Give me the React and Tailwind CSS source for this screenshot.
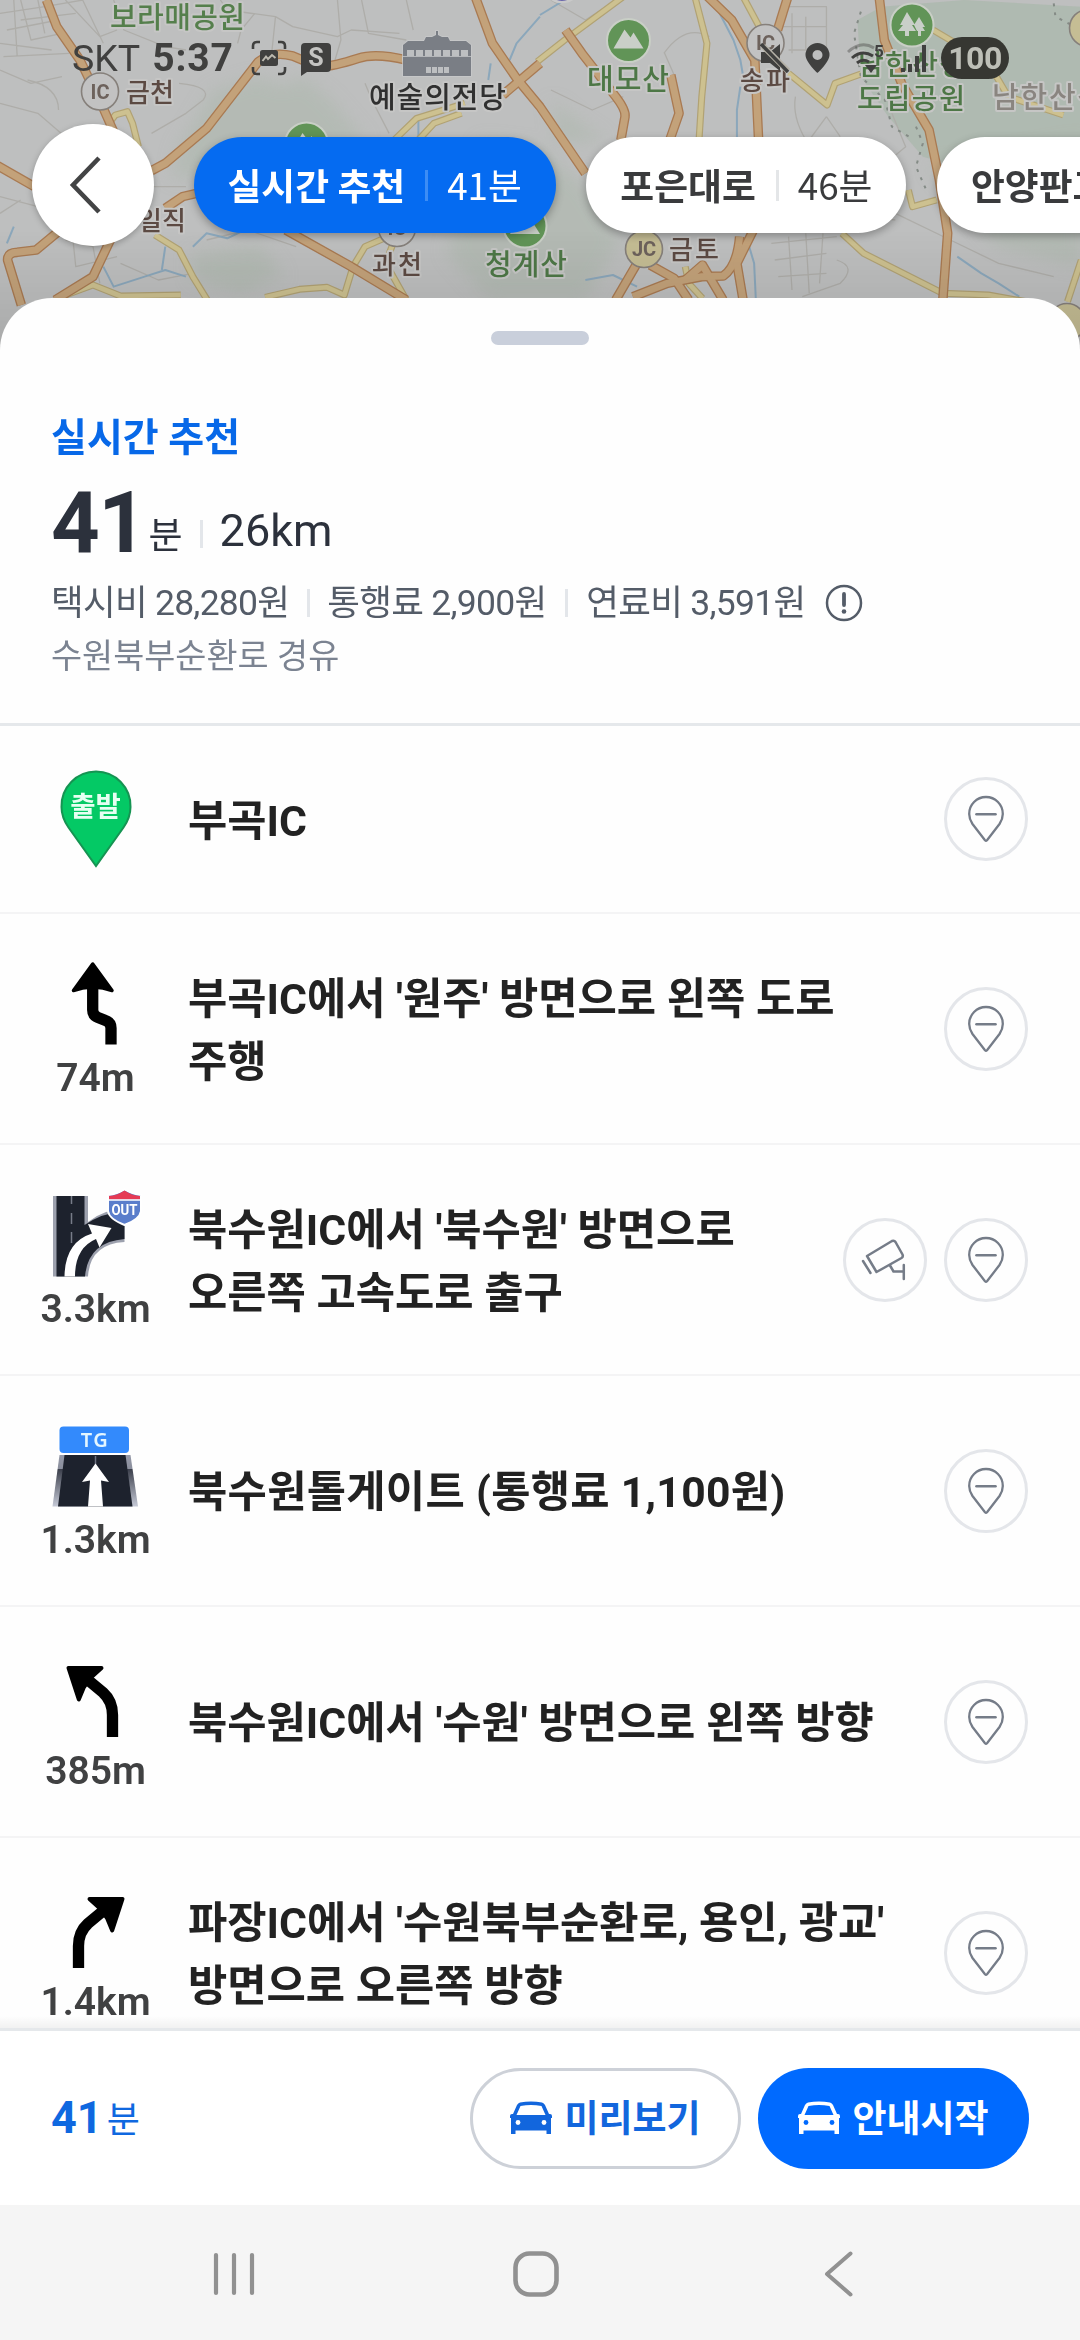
import React from "react";

const ORANGE = [
  "M135 0 L165 80 L232 180 L300 325 L345 430",
  "M-10 495 L100 560",
  "M440 512 L480 490 L600 385 L690 265 L750 185 Q790 152 850 168 L920 198 Q950 205 1040 175 Q1090 158 1180 180",
  "M1380 -10 L1430 130 L1500 235 L1568 320 L1700 520",
  "M1460 285 L1568 190",
  "M480 625 L530 590 L580 578",
  "M62 915 L22 780 Q22 758 50 757 L105 750 L175 690",
  "M325 710 L270 830 L160 900",
  "M830 690 L1020 800 L1180 900",
  "M1642 90 L1690 160 L1788 290 Q1818 330 1815 350 L1803 420",
  "M1948 225 L1972 340 L1945 420",
  "M2055 -10 L2125 60 L2192 180 L2203 420",
  "M2288 -10 L2258 90",
  "M2553 -10 L2568 120 L2618 250 L2698 390 L2728 540 L2752 700 L2738 900",
  "M1850 790 L1788 900",
  "M1838 890 L1938 850 L2038 830 L2100 828 Q2140 800 2148 710",
  "M2188 690 L2140 790 L2158 900",
  "M1888 795 L1958 835 L2000 900",
  "M1990 840 L2040 795 L2100 900",
];
const YELLOW = [
  "M320 365 L335 345 L370 335 L385 370 L402 440",
  "M450 705 L520 750 L560 830 L605 905",
  "M165 895 L270 855 L350 888 L525 885",
  "M1145 420 L1210 355 L1350 310",
  "M1215 420 L1260 370 L1340 340",
  "M1115 715 L1060 740 L1025 800 L1000 885 L950 862 L870 868 L770 892",
  "M1145 720 L1120 790 L1180 900",
  "M1560 185 L1640 120 L1810 -10",
  "M2018 -10 L2053 130 L2038 290 L2030 420",
  "M2158 -10 L2210 90",
  "M2290 220 L2402 315 L2425 250 L2500 222",
  "M2710 90 L2775 130 L2888 220 L2928 290 L3088 345",
  "M2445 700 L2508 760 L2738 880 L2870 885 L2980 905",
  "M2638 570 L2650 620 L2720 600",
  "M3100 905 L3140 780",
  "M1990 800 L2000 850 L2040 895",
];
const MINOR = [
  "M0 40 L130 20 L240 0 M60 0 L90 120 L180 100 M20 90 L170 60 M190 0 L290 110 L340 90 M240 0 L300 130",
  "M0 210 L90 250 L180 230 M80 240 Q170 260 170 330 M0 310 L110 340 L200 420 M330 0 L360 90 L480 140 L540 150",
  "M640 0 L660 30 L800 50 L850 80 L980 110 L1020 90 L1160 100 M800 50 L790 150 M980 0 L990 120 L970 190",
  "M1050 0 L1070 100 L1180 120 M1180 0 L1200 90 M1060 250 L1080 300 L1130 400 M740 40 L700 90 L690 130",
  "M0 590 L110 620 L140 650 M0 640 L60 600 M520 250 Q620 260 590 300 L540 340 L440 400 M350 560 L540 560",
  "M190 720 L270 740 L290 850 M210 700 L220 800 L340 770 M350 790 L460 840 L560 820 M600 720 L720 690 L860 740",
  "M1600 270 L1720 330 L1810 290 M1928 160 Q1990 70 2060 110 M1930 160 L1960 230 M1600 0 L1700 60 L1790 0",
  "M2270 20 L2400 20 L2400 150 L2290 150 M2300 40 L2300 160 M2340 50 L2340 150 M2270 80 L2400 80",
  "M2310 290 Q2300 350 2340 420 M2400 350 L2350 420 M2400 350 L2440 410 M2560 500 L2630 440 L2590 340",
  "M2240 730 L2430 710 M2250 780 L2400 760 M2260 830 L2400 820 M2290 710 L2300 870 M2340 700 L2350 880 M2390 700 L2380 850",
  "M2430 780 Q2490 800 2440 850 L2330 890 M2600 640 L2760 720 L2900 790 L3060 830 M2440 640 L2600 660",
  "M40 0 L50 170 M110 0 L130 100 M0 130 L150 150 M60 60 L220 40 M10 170 L200 160",
];
const GREEN = [
  "M620 270 L750 230 L820 260 L880 230 L960 300 L1060 420 L900 540 L700 500 L500 540 L520 440 Z",
  "M1400 420 L1560 440 L1700 560 L1800 720 L1700 900 L1420 900 L1300 760 Z",
  "M1600 300 L1700 380 L1760 420 L1620 430 Z",
  "M560 760 L760 740 L820 830 L700 880 L560 840 Z",
  "M2700 500 L3140 420 L3140 800 L2900 740 L2780 600 Z",
];
const FOREST = [
  "M2490 60 L2560 20 L2800 0 L3140 20 L3140 420 L3000 480 L2780 500 L2680 470 L2580 350 L2500 230 Z",
];
const BLUE = [
  "M1568 50 L1500 130 L1480 180",
  "M1568 45 L1640 0",
  "M2080 20 L2130 120 L2150 180 L2160 240",
  "M2150 260 L2140 330 L2140 420",
  "M2170 720 L2190 790 L2195 900",
  "M300 800 L330 860 L420 830 L480 810 L540 830 M470 810 L480 740",
  "M560 740 L600 700 L660 715 L710 690",
  "M20 730 L40 680",
  "M1425 190 L1418 240",
  "M1215 350 L1215 410",
  "M2780 770 L2850 820 L2900 850 L2960 890",
  "M1700 840 L1780 825 L1850 860",
];

function PeakBadge({ x, y }) {
  return (
    <g transform={`translate(${x} ${y})`}>
      <circle r="21.5" fill="#619457" stroke="#c9cfc6" strokeWidth="2" />
      <path d="M-15 8 L-4 -11 L2 -3 L5 -8 L15 8 Z" fill="#c9cfc8" />
    </g>
  );
}

function JunctionBadge({ x, y, label, fill = "#c2c2c2" }) {
  return (
    <g transform={`translate(${x} ${y})`}>
      <circle r="18.5" fill={fill} stroke="#86807b" strokeWidth="1.6" />
      <text y="7" textAnchor="middle" fontSize="20" fontWeight="700" fill="#6d625c">{label}</text>
    </g>
  );
}

const LABELS = [
  ["보라매공원", 110, 28, 135, 29, "#557f4c"],
  ["금천", 126, 102, 48, 26, "#5c4a43"],
  ["예술의전당", 369, 108, 137, 29, "#303030"],
  ["일직", 138, 230, 48, 26, "#5c4a43"],
  ["과천", 372, 274, 50, 26, "#5c4a43"],
  ["청계산", 485, 275, 82, 29, "#4d7746"],
  ["대모산", 587, 90, 82, 29, "#4d7746"],
  ["송파", 740, 90, 50, 26, "#5c4a43"],
  ["남한산성", 858, 75, 107, 28, "#4d7746"],
  ["도립공원", 857, 109, 108, 28, "#4d7746"],
  ["남한산성", 992, 108, 112, 29, "#8a8580"],
  ["금토", 669, 259, 50, 26, "#5c4a43"],
];

function MapView() {
  return (
    <svg className="absolute inset-0 h-[360px] w-[1080px]" viewBox="0 0 1080 360" fontFamily='Roboto, "Noto Sans CJK KR", sans-serif'>
      <defs>
        <linearGradient id="shade" x1="0" y1="0" x2="0" y2="1">
          <stop offset="0" stopColor="#000" stopOpacity="0" />
          <stop offset="1" stopColor="#000" stopOpacity="0.12" />
        </linearGradient>
        <filter id="soft"><feGaussianBlur stdDeviation="24" /></filter>
      </defs>
      <rect width="1080" height="360" fill="#bebfbf" />
      <g transform="scale(0.34435 0.33333)" fill="none" strokeLinejoin="round">
        <g filter="url(#soft)">{GREEN.map((d) => <path key={d} d={d} fill="#adb8ae" opacity="0.6" />)}</g>
        {FOREST.map((d) => <path key={d} d={d} fill="#adb8ae" opacity="0.85" />)}
        {MINOR.map((d) => <path key={d} d={d} stroke="#aeada9" strokeWidth="1.3" vectorEffect="non-scaling-stroke" />)}
        {BLUE.map((d) => <path key={d} d={d} stroke="#8ba7bb" strokeWidth="2" vectorEffect="non-scaling-stroke" />)}
        {YELLOW.map((d) => <path key={d} d={d} stroke="#b1a274" strokeWidth="7" vectorEffect="non-scaling-stroke" />)}
        {YELLOW.map((d) => <path key={d + "f"} d={d} stroke="#cdc190" strokeWidth="4.6" vectorEffect="non-scaling-stroke" />)}
        {ORANGE.map((d) => <path key={d} d={d} stroke="#a97a52" strokeWidth="9.6" vectorEffect="non-scaling-stroke" />)}
        {ORANGE.map((d) => <path key={d + "f"} d={d} stroke="#c3a27a" strokeWidth="7" vectorEffect="non-scaling-stroke" />)}
        <path d="M2500 35 L2480 100 L2500 230 L2570 300 L2590 380 L2640 410 M2660 380 L2680 430 L2660 500 L2690 570 M3060 10 L3065 50 L3140 90" stroke="#848b86" strokeWidth="2" strokeDasharray="3 6" vectorEffect="non-scaling-stroke" />
      </g>
      <circle cx="562" cy="-17" r="19" fill="#4a45a0" stroke="#c9c9c9" strokeWidth="2.5" />
      <PeakBadge x="628.5" y="40.5" />
      <PeakBadge x="306.5" y="144" />
      <PeakBadge x="525" y="226" />
      <g transform="translate(912 25)">
        <circle r="21.5" fill="#619457" stroke="#c9cfc6" strokeWidth="2" />
        <path d="M-5 -13 L3 0 H0 L4 6 H-3 V11 H-7 V6 H-14 L-9 0 H-12 Z M7 -8 L13 2 H10.500 L13 6 H9 V11 H6 V6 H5 L2 0 Z" fill="#c9cfc8" />
      </g>
      <JunctionBadge x="100" y="91.500" label="IC" />
      <JunctionBadge x="765.500" y="43" label="IC" />
      <JunctionBadge x="397" y="228" label="IC" />
      <JunctionBadge x="644" y="249" label="JC" fill="#c5bd94" />
      <JunctionBadge x="1088" y="28" label="" fill="#c5bd94" />
      <JunctionBadge x="1067" y="322" label="" fill="#c5bd94" />
      <g fill="#7a7e85" stroke="#c9cacb" strokeWidth="1.5" paintOrder="stroke">
        <path d="M436 31 h2 v4 l4 2 h6 l2 4 h16 l5 4 v15 h-68 v-15 l5 -4 h16 l2 -4 h6 l4 -2 z" />
        <rect x="403" y="57" width="68" height="19" />
      </g>
      <path d="M407 50 h7 v6 h-7z M416 50 h7 v6 h-7z M425 50 h7 v6 h-7z M434 50 h7 v6 h-7z M443 50 h7 v6 h-7z M452 50 h7 v6 h-7z M461 50 h7 v6 h-7z M426 67 h5 v6 h-5z M432 67 h5 v6 h-5z M438 67 h5 v6 h-5z M444 67 h5 v6 h-5z" fill="#bdbfc1" />
      {LABELS.map(([t, x, y, w, s, c]) => (
        <text key={t + x} x={x} y={y} textLength={w} fontSize={s} fontWeight="500" fill={c} stroke="#c6c6c5" strokeWidth="4" strokeLinejoin="round" paintOrder="stroke">{t}</text>
      ))}
      <rect y="230" width="1080" height="130" fill="url(#shade)" />
    </svg>
  );
}

function StatusBar() {
  return (
    <div className="relative flex h-[116px] items-center pl-[72px] pr-[71px] text-[#40403f]">
      <span className="text-[37.500px] leading-[44px]">SKT</span>
      <span className="ml-[12px] text-[39px] font-bold leading-[44px] tracking-[0.900px]">5:37</span>
      <svg className="ml-[17px] size-[36px]" viewBox="0 0 36 36" fill="none" stroke="currentColor" strokeWidth="2.6">
        <path d="M2 9 V6 Q2 2 6 2 H9 M27 2 H30 Q34 2 34 6 V9 M34 27 V30 Q34 34 30 34 H27 M9 34 H6 Q2 34 2 30 V27" />
        <rect x="9" y="10" width="18" height="16" rx="2.500" fill="currentColor" stroke="none" />
        <path d="M11.500 21 L15 16.500 L17 19 L21 15 L24.500 18" stroke="#bcb9b0" strokeWidth="2" />
      </svg>
      <div className="relative ml-[14px] mt-[2px] flex h-[33px] w-[30px] justify-center">
        <svg className="absolute inset-0 h-[33px] w-[30px]" viewBox="0 0 30 33" fill="currentColor"><path d="M4 0 H26 Q30 0 30 4 V25 Q30 29 26 29 H6 L0 33 V4 Q0 0 4 0Z" /></svg>
        <span className="relative text-[25px] font-bold leading-[29px] text-[#c4c4c2]">S</span>
      </div>
      <div className="ml-auto flex items-center">
        <svg className="h-[30px] w-[30px]" viewBox="0 0 30 30" fill="currentColor">
          <path d="M1 9 H10 L20 1 V28 L10 20 H1Z" />
          <path d="M3 3 L28 28" stroke="#b5b1a6" strokeWidth="6" /><path d="M1 1 L28 29" stroke="currentColor" strokeWidth="3.500" />
        </svg>
        <svg className="ml-[15px] h-[30px] w-[25px]" viewBox="0 0 25 30" fill="currentColor"><path fillRule="evenodd" d="M12.500 0 A12 12 0 0 1 24.500 12 C24.500 19 12.500 30 12.500 30 S.5 19 .5 12 A12 12 0 0 1 12.500 0Z M12.500 7 A5 5 0 1 0 12.500 17 A5 5 0 1 0 12.500 7Z" /></svg>
        <svg className="ml-[17px] h-[34px] w-[44px]" viewBox="0 0 44 34" fill="none" stroke="currentColor" strokeWidth="3">
          <path d="M1 11 Q14 -1 27 7" opacity="0.4" /><path d="M5 17 Q15 8 26 15" /><path d="M10 22 Q16 17 22 21" />
          <path d="M18 24 H30 L24 32Z" fill="currentColor" stroke="none" />
          <text x="27" y="16" fontSize="17" fontWeight="700" fill="currentColor" stroke="none">5</text>
        </svg>
        <svg className="ml-[8px] h-[32px] w-[30px]" viewBox="0 0 30 32" fill="currentColor"><path d="M2 26h4v4H2z M9 22h4v8H9z M16 14h4v16h-4z M23 3h4v27h-4z" /></svg>
        <div className="ml-[12px] flex h-[42px] w-[68px] items-center justify-center rounded-full bg-[#363732] text-[32px] font-bold leading-none tracking-[-0.500px] text-[#bdbfb7]">100</div>
      </div>
    </div>
  );
}

function RouteChip({ name, time, active }) {
  return (
    <div className={"flex h-[96px] shrink-0 items-center whitespace-nowrap rounded-full px-[34px] pb-[3px] font-['Noto_Sans_CJK_KR',sans-serif] text-[36.8px] leading-[52px] shadow-[0_3px_8px_rgba(0,0,0,0.3)] " + (active ? "bg-[#056bf1] text-white" : "bg-white text-[#3a3b3d]")}>
      <span className="font-bold">{name}</span>
      <span className={"ml-[20px] mr-[19px] mt-[3px] h-[31px] w-[3px] " + (active ? "bg-[#3d8df5]" : "bg-[#e4e6e8]")} />
      <span>{time}</span>
    </div>
  );
}

function RouteChips() {
  return (
    <div className="relative flex items-center overflow-hidden pb-[40px] pl-[32px] -mt-[6px] pt-[14px]">
      <button className="flex size-[122px] shrink-0 items-center justify-center rounded-full bg-white shadow-[0_2px_6px_rgba(0,0,0,0.25)]">
        <svg className="-ml-[16px] h-[58px] w-[34px]" viewBox="0 0 34 58" fill="none" stroke="#434445" strokeWidth="4.600"><path d="M31 2 L5 29 L31 56" /></svg>
      </button>
      <div className="ml-[39.500px] flex gap-[30.500px]">
        <RouteChip name="실시간 추천" time="41분" active />
        <RouteChip name="포은대로" time="46분" />
        <RouteChip name="안양판교로" time="49분" />
      </div>
    </div>
  );
}

function Bar({ className }) {
  return <span className={"h-[28px] w-[3px] bg-[#e3e6ea] " + className} />;
}

function Summary() {
  return (
    <div className="h-[428px] shrink-0 border-b-[3px] border-[#e5e8eb] px-[51px]">
      <div className="flex justify-center pt-[33px]"><div className="h-[14px] w-[98px] rounded-full bg-[#c9cfdb]" /></div>
      <h2 className="mt-[64px] text-[39px] font-bold leading-[58px] text-[#0768e8]">실시간 추천</h2>
      <div className="mt-[16px] flex h-[80px] items-baseline text-[#2c313c]">
        <span className="text-[85px] font-bold leading-[80px] tracking-[-1.500px]">41</span>
        <span className="ml-[3px] translate-y-[-3px] text-[37px] leading-[50px]">분</span>
        <Bar className="ml-[17px] translate-y-[-4px]" />
        <span className="ml-[17px] translate-y-[-6px] text-[45px] leading-[50px]">26km</span>
      </div>
      <div className="mt-[13px] flex h-[54px] items-center text-[35.500px] leading-[54px] tracking-[-0.720px] text-[#545c68]">
        <span>택시비 28,280원</span><Bar className="ml-[18px] mr-[17px]" />
        <span>통행료 2,900원</span><Bar className="ml-[19px] mr-[18px]" />
        <span>연료비 3,591원</span>
        <svg className="ml-[20px] size-[38px]" viewBox="0 0 38 38" fill="none" stroke="#545c68" strokeWidth="2.500"><circle cx="19" cy="19" r="17" /><path d="M19 10 V21" strokeWidth="3.800" strokeLinecap="round" /><circle cx="19" cy="27.500" r="2.300" fill="#545c68" stroke="none" /></svg>
      </div>
      <p className="mt-[1px] text-[33.800px] leading-[52px] text-[#7b8391]">수원북부순환로 경유</p>
    </div>
  );
}

function IconStart() {
  return (
    <div className="relative flex h-[98px] w-[72px] justify-center">
      <svg className="absolute inset-0 h-[98px] w-[72px]" viewBox="0 0 72 98"><path d="M36 1.500 A34.500 34.500 0 0 1 70.500 37 C70.500 45 68 51 63.500 57.500 L36 96 L8.500 57.500 C4 51 1.500 45 1.500 37 A34.500 34.500 0 0 1 36 1.500Z" fill="#04c965" stroke="#159452" strokeWidth="2" /></svg>
      <span className="relative mt-[17px] text-[27.500px] font-bold leading-[40px] text-[#e6fff2]">출발</span>
    </div>
  );
}

/* Manoeuvre icons share a 96x90 box above their distance. */
const iconBox = "h-[90px] w-[96px]";

function IconKeepLeft() {
  return (
    <svg className={iconBox} viewBox="0 0 96 90">
      <path d="M44.700 14 V54 Q44.700 59.500 50 61.500 L57.500 64.500 Q63 66.500 63 72 V88.500" fill="none" stroke="#000" strokeWidth="11.300" />
      <path d="M44.700 8 L64 34.500 L55 32 L44.700 31 L34.500 32 L25.500 34.500Z" fill="#000" stroke="#000" strokeWidth="3.500" strokeLinejoin="round" />
    </svg>
  );
}

function IconTurnLeft() {
  return (
    <svg className={iconBox} viewBox="0 0 96 90">
      <path d="M40 31 L55 43.500 Q64.500 52 64.500 66 V88" fill="none" stroke="#000" strokeWidth="11.300" />
      <path d="M20.500 19 L53.500 19 L43 28.500 L36 38 L30.800 50.500Z" fill="#000" stroke="#000" strokeWidth="4" strokeLinejoin="round" />
    </svg>
  );
}

function IconTurnRight() {
  return (
    <svg className={iconBox} viewBox="0 0 96 90">
      <path d="M55 31 L40 43.500 Q30.500 52 30.500 66 V88" fill="none" stroke="#000" strokeWidth="11.300" />
      <path d="M74.500 19 L41.500 19 L52 28.500 L59 38 L64.200 50.500Z" fill="#000" stroke="#000" strokeWidth="4" strokeLinejoin="round" />
    </svg>
  );
}

function IconExit() {
  return (
    <svg className={iconBox} viewBox="0 0 96 90">
      <path d="M5 9 H40 V35 Q56 22 76.500 22 V55 Q42 57 40 89.500 H5Z" fill="#9da1ae" />
      <path d="M8.500 9 H36.500 V38 Q54 26 76.500 24 V52 Q40 55 37 89.500 H8.500Z" fill="#1d222d" />
      <path d="M23.500 9 V17 M23.500 26 V37 M23.500 45 V56" stroke="#777c89" strokeWidth="1.500" />
      <path d="M16.500 89.500 Q17 55 44 46.500 L40 37 L63.500 41 L51.500 60.500 L48 52 Q27 61 27 89.500Z" fill="#fff" />
      <path d="M60 8 Q68 7 76.500 2.500 Q84 7 93 8 V24 Q92 32 76.500 38 Q61 32 60 24Z" fill="#5a7dcb" stroke="#fff" strokeWidth="2" />
      <path d="M61 9 Q69 8.500 76.500 3.500 Q84 8.500 92 9 V12.500 H61Z" fill="#e53a55" />
      <path d="M60 13 H93" stroke="#fff" strokeWidth="1.300" />
      <text x="76.500" y="28" textAnchor="middle" fontSize="15" fontWeight="700" textLength="26" lengthAdjust="spacingAndGlyphs" fill="#fff">OUT</text>
    </svg>
  );
}

function IconTollGate() {
  return (
    <svg className={iconBox} viewBox="0 0 96 90">
      <defs><linearGradient id="curb" x1="0" y1="0" x2="0" y2="1"><stop offset="0" stopColor="#9599a8" /><stop offset=".27" stopColor="#8a8e9c" /><stop offset=".28" stopColor="#3c404c" /><stop offset="1" stopColor="#c5c9d6" /></linearGradient></defs>
      <path d="M11.500 37 H82.500 L90 88.500 H4.500Z" fill="url(#curb)" />
      <path d="M16.500 37 H77.500 L84.500 88.500 H10Z" fill="#1d222d" />
      <path d="M47.500 38 V50" stroke="#6d7180" strokeWidth="1.500" />
      <path d="M47.500 45.500 L61 64 L53 62.500 L55 88.500 H40 L42 62.500 L34 64Z" fill="#fff" />
      <rect x="10" y="7" width="72" height="30" rx="5" fill="#fff" />
      <rect x="11.500" y="8.500" width="69.500" height="26.500" rx="4" fill="#338afc" />
      <text x="47" y="29" textAnchor="middle" fontSize="20" fontWeight="600" fill="#e4f6ff" letterSpacing="1.500" fontFamily='"Noto Sans", sans-serif'>TG</text>
    </svg>
  );
}

function PinButton() {
  return (
    <button className="flex size-[84px] items-center justify-center rounded-full border-[3px] border-[#e4e6ea]">
      <svg className="h-[48px] w-[38px]" viewBox="0 0 38 48" fill="none" stroke="#757c88" strokeWidth="2.300" strokeLinejoin="round" strokeLinecap="round"><path d="M19 2 A16.800 16.800 0 0 1 35.800 19 Q35.800 24 32.500 29 L20 45.300 Q19 46.300 18 45.300 L5.500 29 Q2.200 24 2.200 19 A16.800 16.800 0 0 1 19 2Z" /><path d="M9.500 19.300 H28.500" strokeWidth="2.600" /></svg>
    </button>
  );
}

function CctvButton() {
  return (
    <button className="flex size-[84px] items-center justify-center rounded-full border-[3px] border-[#e4e6ea]">
      <svg className="size-[48px]" viewBox="0 0 48 48" fill="none" stroke="#757c88" strokeWidth="2.500" strokeLinejoin="round" strokeLinecap="round"><path d="M6 20 L31 5 Q33.200 4 34.500 6 L41.500 18.500 Q42.500 20.800 40.500 22 L15.500 36 Z" /><path d="M2 25 L9.500 37 M29 29.500 L32.500 35.500 H42.500 M42.800 29 V43" /></svg>
    </button>
  );
}

const STEPS = [
  { Icon: IconStart, lines: ["부곡IC"] },
  { Icon: IconKeepLeft, dist: "74m", lines: ["부곡IC에서 '원주' 방면으로 왼쪽 도로", "주행"] },
  { Icon: IconExit, dist: "3.3km", lines: ["북수원IC에서 '북수원' 방면으로", "오른쪽 고속도로 출구"], cctv: true },
  { Icon: IconTollGate, dist: "1.3km", lines: ["북수원톨게이트 (통행료 1,100원)"], wide: true },
  { Icon: IconTurnLeft, dist: "385m", lines: ["북수원IC에서 '수원' 방면으로 왼쪽 방향"] },
  { Icon: IconTurnRight, dist: "1.4km", lines: ["파장IC에서 '수원북부순환로, 용인, 광교'", "방면으로 오른쪽 방향"] },
];

function Step({ step }) {
  const { Icon, dist, lines, cctv, wide } = step;
  return (
    <li className={"flex shrink-0 items-center border-b-2 border-[#f4f4f5] pr-[52px] " + (dist ? "h-[231px]" : "h-[188px]")}>
      <div className="flex w-[191px] shrink-0 flex-col items-center">
        <Icon />
        {dist && <span className="mt-[9px] text-[39px] font-semibold leading-[46px] text-[#404142]">{dist}</span>}
      </div>
      <div className={"-ml-[3px] grow whitespace-nowrap pt-[4px] text-[42.700px] font-bold leading-[63px] text-[#222] " + (wide ? "tracking-[0.300px]" : "")}>
        {lines.map((l) => <div key={l}>{l}</div>)}
      </div>
      <div className="flex gap-[17px]">
        {cctv && <CctvButton />}
        <PinButton />
      </div>
    </li>
  );
}

function CarIcon({ hole }) {
  return (
    <svg className="h-[34px] w-[42px]" viewBox="0 0 42 34" fill="currentColor">
      <path fillRule="evenodd" d="M10 1.500 Q21 -0.500 32 1.500 Q34 2 35 4 L39 13 H40 Q42 13 42 15 V17 H41 V33 H36.500 V29.500 H5.500 V33 H1 V17 H0 V15 Q0 13 2 13 H3 L7 4 Q8 2 10 1.500Z M10.500 5 L6.500 14 H35.500 L31.500 5 Q21 3 10.500 5Z" />
      <circle cx="8" cy="21.500" r="2.400" fill={hole} /><circle cx="34" cy="21.500" r="2.400" fill={hole} />
    </svg>
  );
}

export default function App() {
  return (
    <div className="relative flex h-[2340px] w-[1080px] flex-col overflow-hidden bg-white font-[Roboto,'Noto_Sans_CJK_KR',sans-serif]">
      <header className="relative h-[298px] shrink-0">
        <MapView />
        <StatusBar />
        <RouteChips />
      </header>
      <main className="relative flex h-[1730px] shrink-0 flex-col overflow-hidden rounded-t-[52px] bg-[#fefefe]">
        <Summary />
        <ul className="flex flex-col">{STEPS.map((s) => <Step key={s.lines[0]} step={s} />)}</ul>
        <div className="absolute inset-x-0 bottom-0 h-[12px] bg-gradient-to-b from-transparent to-black/5" />
      </main>
      <footer className="flex h-[177px] shrink-0 items-center border-t-[3px] border-[#e5e8eb] bg-white pl-[51px] pr-[51px]">
        <div className="flex items-baseline pt-[3px] text-[#0f68e0]">
          <span className="text-[45px] font-bold leading-[50px]">41</span>
          <span className="ml-[4px] text-[36px] leading-[50px]">분</span>
        </div>
        <div className="ml-auto flex gap-[17px] text-[37px] font-bold leading-[52px]">
          <button className="flex h-[101px] w-[271px] items-center justify-center gap-[12px] rounded-full border-[3px] border-[#cdd1d8] text-[#1266dd]"><CarIcon hole="#fff" /><span className="pt-[3px]">미리보기</span></button>
          <button className="flex h-[101px] w-[271px] items-center justify-center gap-[12px] rounded-full bg-[#006aff] text-white"><CarIcon hole="#006aff" /><span className="pt-[3px]">안내시작</span></button>
        </div>
      </footer>
      <nav className="flex h-[135px] shrink-0 items-center justify-between bg-[#f5f5f5] pl-[212px] pr-[225px] pt-[2px]">
        <svg className="h-[48px] w-[44px]" viewBox="0 0 44 48" stroke="#919191" strokeWidth="4.200" strokeLinecap="round"><path d="M4 5 V43 M22 5 V43 M40 5 V43" /></svg>
        <svg className="mr-[7px] h-[48px] w-[48px]" viewBox="0 0 48 48" fill="none" stroke="#919191" strokeWidth="4.600"><rect x="3.500" y="3.500" width="41" height="41" rx="14" /></svg>
        <svg className="h-[48px] w-[32px]" viewBox="0 0 32 48" fill="none" stroke="#919191" strokeWidth="4" strokeLinecap="round" strokeLinejoin="round"><path d="M27.500 3.500 L4 24 L27.500 44.500" /></svg>
      </nav>
    </div>
  );
}
